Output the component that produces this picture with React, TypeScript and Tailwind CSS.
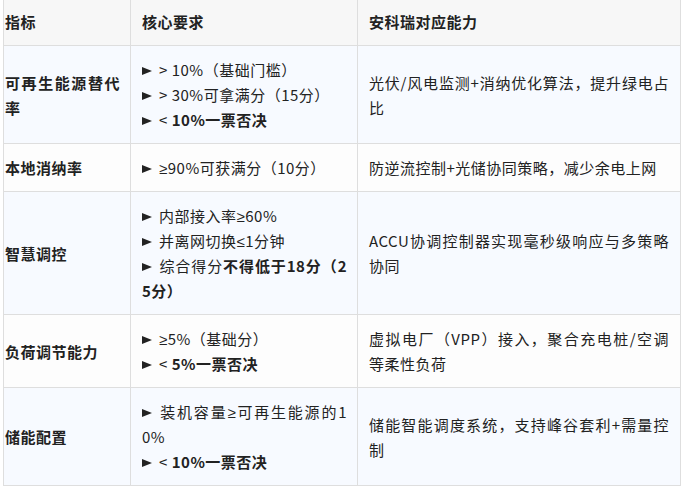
const BLUE = "bg-[#f7faff]";
const WHITE = "bg-[#fdfdfd]";

// first line of a wrapped cell: stretched like the source's justified text
const J = "block [text-align-last:justify]";

const Tri = () => (
  <span className="mr-[7px] inline-block h-0 w-0 border-y-[4px] border-l-[10px] border-y-transparent border-l-[#222] align-[1px]" />
);

// upright comparison signs; leading-none keeps the line box from growing
const Ge = () => <span className="font-['Liberation_Sans'] leading-none">≥</span>;
const Le = () => <span className="font-['Liberation_Sans'] leading-none">≤</span>;

const td = "border border-[#dedede] py-[11px] align-middle";
const c1 = `${td} pl-[1px] pr-[10px] font-bold text-justify`;
const c2 = `${td} pl-[11px] pr-[10px] text-justify`;
const c3 = `${td} pl-[11px] pr-[11px] text-justify`;

export default function App() {
  return (
    <div className="h-[490px] w-[684px] overflow-hidden bg-white">
      <table
        className="ml-[3px] mt-[-3px] w-[677px] table-fixed border-collapse text-[15px] leading-[25px] tracking-[0.5px] text-[#222]"
        style={{ fontFamily: '"Noto Sans CJK SC", "Noto Sans", sans-serif' }}
      >
        <colgroup>
          <col className="w-[127px]" />
          <col className="w-[227px]" />
          <col className="w-[323px]" />
        </colgroup>
        <thead>
          <tr className="bg-[#f7f7f7] text-left font-bold">
            <th className={c1}>指标</th>
            <th className={c2}>核心要求</th>
            <th className={c3}>安科瑞对应能力</th>
          </tr>
        </thead>
        <tbody>
          <tr className={BLUE}>
            <td className={c1}>
              <span className={J}>可再生能源替代</span>
              <span className="block">率</span>
            </td>
            <td className={c2}>
              <p><Tri />&gt; 10%（基础门槛）</p>
              <p><Tri />&gt; 30%可拿满分（15分）</p>
              <p><Tri />&lt; <b>10%一票否决</b></p>
            </td>
            <td className={c3}>
              <span className={J}>光伏/风电监测+消纳优化算法，提升绿电占</span>
              <span className="block">比</span>
            </td>
          </tr>
          <tr className={WHITE}>
            <td className={c1}>本地消纳率</td>
            <td className={c2}>
              <p><Tri /><Ge />90%可获满分（10分）</p>
            </td>
            <td className={c3}>防逆流控制+光储协同策略，减少余电上网</td>
          </tr>
          <tr className={BLUE}>
            <td className={c1}>智慧调控</td>
            <td className={c2}>
              <p><Tri />内部接入率<Ge />60%</p>
              <p><Tri />并离网切换<Le />1分钟</p>
              <p className={J}><Tri />综合得分<b>不得低于18分（2</b></p>
              <p><b>5分）</b></p>
            </td>
            <td className={c3}>
              <span className={J}>ACCU协调控制器实现毫秒级响应与多策略</span>
              <span className="block">协同</span>
            </td>
          </tr>
          <tr className={WHITE}>
            <td className={c1}>负荷调节能力</td>
            <td className={c2}>
              <p><Tri /><Ge />5%（基础分）</p>
              <p><Tri />&lt; <b>5%一票否决</b></p>
            </td>
            <td className={c3}>
              <span className={J}>虚拟电厂（VPP）接入，聚合充电桩/空调</span>
              <span className="block">等柔性负荷</span>
            </td>
          </tr>
          <tr className={BLUE}>
            <td className={c1}>储能配置</td>
            <td className={c2}>
              <p className={J}><Tri />装机容量<Ge />可再生能源的1</p>
              <p>0%</p>
              <p><Tri />&lt; <b>10%一票否决</b></p>
            </td>
            <td className={c3}>
              <span className={J}>储能智能调度系统，支持峰谷套利+需量控</span>
              <span className="block">制</span>
            </td>
          </tr>
        </tbody>
      </table>
    </div>
  );
}
